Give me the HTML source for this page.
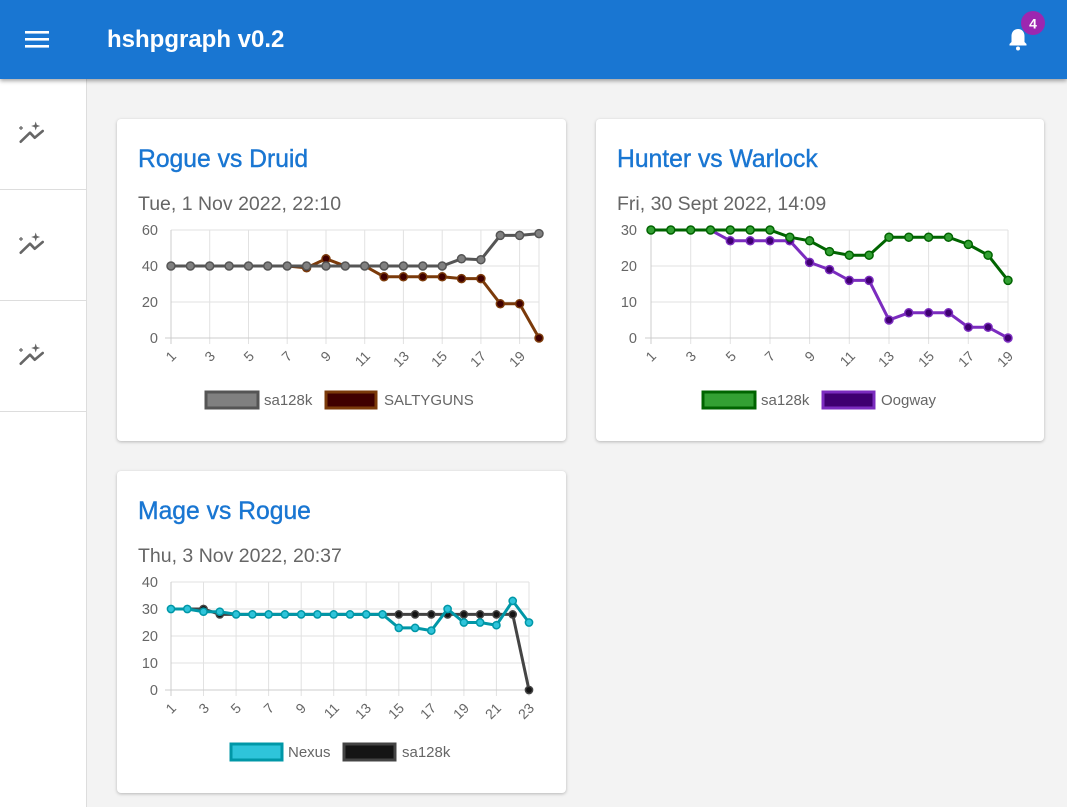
<!DOCTYPE html>
<html><head><meta charset="utf-8"><style>
*{margin:0;padding:0;box-sizing:border-box}
body{width:1067px;height:807px;overflow:hidden;background:#f3f3f3;font-family:"Liberation Sans",sans-serif;position:relative}
.hdr{position:absolute;left:0;top:0;width:1067px;height:79px;background:#1976d2;box-shadow:0 2px 4px rgba(0,0,0,.35);z-index:3}
.hdr .t{position:absolute;left:107px;top:26px;color:#fff;font-size:24px;font-weight:bold}
.side{position:absolute;left:0;top:79px;width:87px;height:728px;background:#fff;border-right:1px solid #ddd}
.side div{height:111px;border-bottom:1px solid #ddd}
.card{position:absolute;background:#fff;border-radius:4px;box-shadow:0 1px 3px rgba(0,0,0,.25)}
.card h2{position:absolute;left:21px;top:27px;font-size:24.7px;font-weight:normal;color:#1976d2;-webkit-text-stroke:.4px #1976d2}
.card p{position:absolute;left:21px;top:74px;font-size:19.5px;color:#666}
svg.ov{position:absolute;left:0;top:0;z-index:4}
</style></head><body>
<div class="hdr"><div class="t">hshpgraph v0.2</div></div>
<div class="side"><div></div><div></div><div></div></div>
<div class="card" style="left:117px;top:119px;width:449px;height:322px"><h2>Rogue vs Druid</h2><p>Tue, 1 Nov 2022, 22:10</p></div>
<div class="card" style="left:596px;top:119px;width:448px;height:322px"><h2>Hunter vs Warlock</h2><p>Fri, 30 Sept 2022, 14:09</p></div>
<div class="card" style="left:117px;top:471px;width:449px;height:322px"><h2>Mage vs Rogue</h2><p>Thu, 3 Nov 2022, 20:37</p></div>
<svg class="ov" width="1067" height="807" font-family="Liberation Sans,sans-serif">
<g fill="#fff"><rect x="25" y="31" width="24" height="2.6"/><rect x="25" y="38" width="24" height="2.6"/><rect x="25" y="45" width="24" height="2.6"/></g>
<path d="M1018 29c-4 0-6.5 3-6.5 7v6l-2 2v1.5h17v-1.5l-2-2v-6c0-4-2.5-7-6.5-7z" fill="#fff"/><circle cx="1018" cy="48.5" r="2" fill="#fff"/>
<circle cx="1033" cy="23" r="12" fill="#9c27b0"/><text x="1033" y="28.5" fill="#fff" font-size="14" font-weight="bold" text-anchor="middle">4</text>
<g id="ic"><path d="M20.7 141.7L30 132.7L34.7 137.7L42.7 131" fill="none" stroke="#666" stroke-width="2.6" stroke-linecap="round" stroke-linejoin="round"/>
<path d="M19 128h4M21 126v4" stroke="#666" stroke-width="1.2"/><path d="M35.7 121.5l1.1 3.4 3.4 1.1-3.4 1.1-1.1 3.4-1.1-3.4-3.4-1.1 3.4-1.1z" fill="#666"/></g>
<use href="#ic" y="111"/><use href="#ic" y="222"/>

<!-- CHART 1 -->
<g stroke="#e2e2e2" stroke-width="1"><path d="M171 230H539M171 266H539M171 302H539M171 338H539"/><path d="M209.7 230V344M248.5 230V344M287.2 230V344M326 230V344M364.7 230V344M403.4 230V344M442.2 230V344M480.9 230V344M519.6 230V344M539 230V338"/></g>
<path d="M171 230V344M165 338H539" stroke="#ccc"/>
<g font-size="14.5" fill="#666" text-anchor="end"><text x="158" y="235">60</text><text x="158" y="271">40</text><text x="158" y="307">20</text><text x="158" y="343">0</text></g>
<g font-size="14" fill="#666" text-anchor="end">
<text transform="translate(177,357) rotate(-45)">1</text><text transform="translate(216,357) rotate(-45)">3</text><text transform="translate(255,357) rotate(-45)">5</text><text transform="translate(293,357) rotate(-45)">7</text><text transform="translate(332,357) rotate(-45)">9</text><text transform="translate(371,357) rotate(-45)">11</text><text transform="translate(410,357) rotate(-45)">13</text><text transform="translate(448,357) rotate(-45)">15</text><text transform="translate(487,357) rotate(-45)">17</text><text transform="translate(526,357) rotate(-45)">19</text></g>
<g stroke="#7b3a0a" stroke-width="3" fill="#400000"><polyline fill="none" points="171,266 190.4,266 209.7,266 229.1,266 248.5,266 267.8,266 287.2,266 306.6,267.8 326,258.8 345.3,266 364.7,266 384.1,276.8 403.4,276.8 422.8,276.8 442.2,276.8 461.5,278.6 480.9,278.6 500.3,303.8 519.6,303.8 539,338"/>
<g stroke-width="1.5"><circle cx="306.6" cy="267.8" r="4"/><circle cx="326" cy="258.8" r="4"/><circle cx="384.1" cy="276.8" r="4"/><circle cx="403.4" cy="276.8" r="4"/><circle cx="422.8" cy="276.8" r="4"/><circle cx="442.2" cy="276.8" r="4"/><circle cx="461.5" cy="278.6" r="4"/><circle cx="480.9" cy="278.6" r="4"/><circle cx="500.3" cy="303.8" r="4"/><circle cx="519.6" cy="303.8" r="4"/><circle cx="539" cy="338" r="4"/></g></g>
<g stroke="#555" stroke-width="3" fill="#808080"><polyline fill="none" points="171,266 190.4,266 209.7,266 229.1,266 248.5,266 267.8,266 287.2,266 306.6,266 326,266 345.3,266 364.7,266 384.1,266 403.4,266 422.8,266 442.2,266 461.5,258.8 480.9,259.7 500.3,235.4 519.6,235.4 539,233.6"/>
<g stroke-width="1.5"><circle cx="171" cy="266" r="4"/><circle cx="190.4" cy="266" r="4"/><circle cx="209.7" cy="266" r="4"/><circle cx="229.1" cy="266" r="4"/><circle cx="248.5" cy="266" r="4"/><circle cx="267.8" cy="266" r="4"/><circle cx="287.2" cy="266" r="4"/><circle cx="306.6" cy="266" r="4"/><circle cx="326" cy="266" r="4"/><circle cx="345.3" cy="266" r="4"/><circle cx="364.7" cy="266" r="4"/><circle cx="384.1" cy="266" r="4"/><circle cx="403.4" cy="266" r="4"/><circle cx="422.8" cy="266" r="4"/><circle cx="442.2" cy="266" r="4"/><circle cx="461.5" cy="258.8" r="4"/><circle cx="480.9" cy="259.7" r="4"/><circle cx="500.3" cy="235.4" r="4"/><circle cx="519.6" cy="235.4" r="4"/><circle cx="539" cy="233.6" r="4"/></g></g>
<rect x="206" y="392" width="52" height="16" fill="#808080" stroke="#555" stroke-width="3"/><text x="264" y="405" font-size="15" fill="#666">sa128k</text>
<rect x="326" y="392" width="50" height="16" fill="#400000" stroke="#7b3a0a" stroke-width="3"/><text x="384" y="405" font-size="15" fill="#666">SALTYGUNS</text>

<!-- CHART 2 -->
<g stroke="#e2e2e2"><path d="M651 230H1008M651 266H1008M651 302H1008M651 338H1008"/><path d="M690.7 230V344M730.3 230V344M770 230V344M809.6 230V344M849.3 230V344M889 230V344M928.6 230V344M968.3 230V344M1008 230V344"/></g>
<path d="M651 230V344M645 338H1008" stroke="#ccc"/>
<g font-size="14.5" fill="#666" text-anchor="end"><text x="637" y="235">30</text><text x="637" y="271">20</text><text x="637" y="307">10</text><text x="637" y="343">0</text></g>
<g font-size="14" fill="#666" text-anchor="end">
<text transform="translate(657,357) rotate(-45)">1</text><text transform="translate(697,357) rotate(-45)">3</text><text transform="translate(737,357) rotate(-45)">5</text><text transform="translate(776,357) rotate(-45)">7</text><text transform="translate(816,357) rotate(-45)">9</text><text transform="translate(856,357) rotate(-45)">11</text><text transform="translate(895,357) rotate(-45)">13</text><text transform="translate(935,357) rotate(-45)">15</text><text transform="translate(975,357) rotate(-45)">17</text><text transform="translate(1014,357) rotate(-45)">19</text></g>
<g stroke="#7b2cbf" stroke-width="3" fill="#3f0071"><polyline fill="none" points="651,230 670.8,230 690.7,230 710.5,230 730.3,240.8 750.2,240.8 770,240.8 789.8,240.8 809.6,262.4 829.5,269.6 849.3,280.4 869.1,280.4 889,320 908.8,312.8 928.6,312.8 948.5,312.8 968.3,327.2 988.1,327.2 1008,338"/>
<g stroke-width="1.5"><circle cx="730.3" cy="240.8" r="4"/><circle cx="750.2" cy="240.8" r="4"/><circle cx="770" cy="240.8" r="4"/><circle cx="789.8" cy="240.8" r="4"/><circle cx="809.6" cy="262.4" r="4"/><circle cx="829.5" cy="269.6" r="4"/><circle cx="849.3" cy="280.4" r="4"/><circle cx="869.1" cy="280.4" r="4"/><circle cx="889" cy="320" r="4"/><circle cx="908.8" cy="312.8" r="4"/><circle cx="928.6" cy="312.8" r="4"/><circle cx="948.5" cy="312.8" r="4"/><circle cx="968.3" cy="327.2" r="4"/><circle cx="988.1" cy="327.2" r="4"/><circle cx="1008" cy="338" r="4"/></g></g>
<g stroke="#006400" stroke-width="3" fill="#33a033"><polyline fill="none" points="651,230 670.8,230 690.7,230 710.5,230 730.3,230 750.2,230 770,230 789.8,237.2 809.6,240.8 829.5,251.6 849.3,255.2 869.1,255.2 889,237.2 908.8,237.2 928.6,237.2 948.5,237.2 968.3,244.4 988.1,255.2 1008,280.4"/>
<g stroke-width="1.5"><circle cx="651" cy="230" r="4"/><circle cx="670.8" cy="230" r="4"/><circle cx="690.7" cy="230" r="4"/><circle cx="710.5" cy="230" r="4"/><circle cx="730.3" cy="230" r="4"/><circle cx="750.2" cy="230" r="4"/><circle cx="770" cy="230" r="4"/><circle cx="789.8" cy="237.2" r="4"/><circle cx="809.6" cy="240.8" r="4"/><circle cx="829.5" cy="251.6" r="4"/><circle cx="849.3" cy="255.2" r="4"/><circle cx="869.1" cy="255.2" r="4"/><circle cx="889" cy="237.2" r="4"/><circle cx="908.8" cy="237.2" r="4"/><circle cx="928.6" cy="237.2" r="4"/><circle cx="948.5" cy="237.2" r="4"/><circle cx="968.3" cy="244.4" r="4"/><circle cx="988.1" cy="255.2" r="4"/><circle cx="1008" cy="280.4" r="4"/></g></g>
<rect x="703" y="392" width="52" height="16" fill="#33a033" stroke="#006400" stroke-width="3"/><text x="761" y="405" font-size="15" fill="#666">sa128k</text>
<rect x="823" y="392" width="51" height="16" fill="#3f0071" stroke="#7b2cbf" stroke-width="3"/><text x="881" y="405" font-size="15" fill="#666">Oogway</text>

<!-- CHART 3 -->
<g stroke="#e2e2e2"><path d="M171 582H529M171 609H529M171 636H529M171 663H529M171 690H529"/><path d="M203.5 582V696M236.1 582V696M268.6 582V696M301.2 582V696M333.7 582V696M366.2 582V696M398.8 582V696M431.3 582V696M463.9 582V696M496.4 582V696M529 582V696"/></g>
<path d="M171 582V696M165 690H529" stroke="#ccc"/>
<g font-size="14.5" fill="#666" text-anchor="end"><text x="158" y="587">40</text><text x="158" y="614">30</text><text x="158" y="641">20</text><text x="158" y="668">10</text><text x="158" y="695">0</text></g>
<g font-size="14" fill="#666" text-anchor="end">
<text transform="translate(177,709) rotate(-45)">1</text><text transform="translate(210,709) rotate(-45)">3</text><text transform="translate(242,709) rotate(-45)">5</text><text transform="translate(275,709) rotate(-45)">7</text><text transform="translate(307,709) rotate(-45)">9</text><text transform="translate(340,709) rotate(-45)">11</text><text transform="translate(372,709) rotate(-45)">13</text><text transform="translate(405,709) rotate(-45)">15</text><text transform="translate(437,709) rotate(-45)">17</text><text transform="translate(470,709) rotate(-45)">19</text><text transform="translate(502,709) rotate(-45)">21</text><text transform="translate(535,709) rotate(-45)">23</text></g>
<g stroke="#444" stroke-width="3" fill="#151515"><polyline fill="none" points="171,609 187.3,609 203.5,609 219.8,614.4 236.1,614.4 252.4,614.4 268.6,614.4 284.9,614.4 301.2,614.4 317.4,614.4 333.7,614.4 350,614.4 366.2,614.4 382.5,614.4 398.8,614.4 415.1,614.4 431.3,614.4 447.6,614.4 463.9,614.4 480.1,614.4 496.4,614.4 512.7,614.4 529,690"/>
<g stroke-width="1.5"><circle cx="203.5" cy="609" r="3.6"/><circle cx="219.8" cy="614.4" r="3.6"/><circle cx="398.8" cy="614.4" r="3.6"/><circle cx="415.1" cy="614.4" r="3.6"/><circle cx="431.3" cy="614.4" r="3.6"/><circle cx="447.6" cy="614.4" r="3.6"/><circle cx="463.9" cy="614.4" r="3.6"/><circle cx="480.1" cy="614.4" r="3.6"/><circle cx="496.4" cy="614.4" r="3.6"/><circle cx="512.7" cy="614.4" r="3.6"/><circle cx="529" cy="690" r="3.6"/></g></g>
<g stroke="#0097a7" stroke-width="3" fill="#2ec4da"><polyline fill="none" points="171,609 187.3,609 203.5,611.7 219.8,611.7 236.1,614.4 252.4,614.4 268.6,614.4 284.9,614.4 301.2,614.4 317.4,614.4 333.7,614.4 350,614.4 366.2,614.4 382.5,614.4 398.8,627.9 415.1,627.9 431.3,630.6 447.6,609 463.9,622.5 480.1,622.5 496.4,625.2 512.7,600.9 529,622.5"/>
<g stroke-width="1.5"><circle cx="171" cy="609" r="3.6"/><circle cx="187.3" cy="609" r="3.6"/><circle cx="203.5" cy="611.7" r="3.6"/><circle cx="219.8" cy="611.7" r="3.6"/><circle cx="236.1" cy="614.4" r="3.6"/><circle cx="252.4" cy="614.4" r="3.6"/><circle cx="268.6" cy="614.4" r="3.6"/><circle cx="284.9" cy="614.4" r="3.6"/><circle cx="301.2" cy="614.4" r="3.6"/><circle cx="317.4" cy="614.4" r="3.6"/><circle cx="333.7" cy="614.4" r="3.6"/><circle cx="350" cy="614.4" r="3.6"/><circle cx="366.2" cy="614.4" r="3.6"/><circle cx="382.5" cy="614.4" r="3.6"/><circle cx="398.8" cy="627.9" r="3.6"/><circle cx="415.1" cy="627.9" r="3.6"/><circle cx="431.3" cy="630.6" r="3.6"/><circle cx="447.6" cy="609" r="3.6"/><circle cx="463.9" cy="622.5" r="3.6"/><circle cx="480.1" cy="622.5" r="3.6"/><circle cx="496.4" cy="625.2" r="3.6"/><circle cx="512.7" cy="600.9" r="3.6"/><circle cx="529" cy="622.5" r="3.6"/></g></g>
<rect x="231" y="744" width="51" height="16" fill="#2ec4da" stroke="#0097a7" stroke-width="3"/><text x="288" y="757" font-size="15" fill="#666">Nexus</text>
<rect x="344" y="744" width="51" height="16" fill="#151515" stroke="#444" stroke-width="3"/><text x="402" y="757" font-size="15" fill="#666">sa128k</text>
</svg>
</body></html>
